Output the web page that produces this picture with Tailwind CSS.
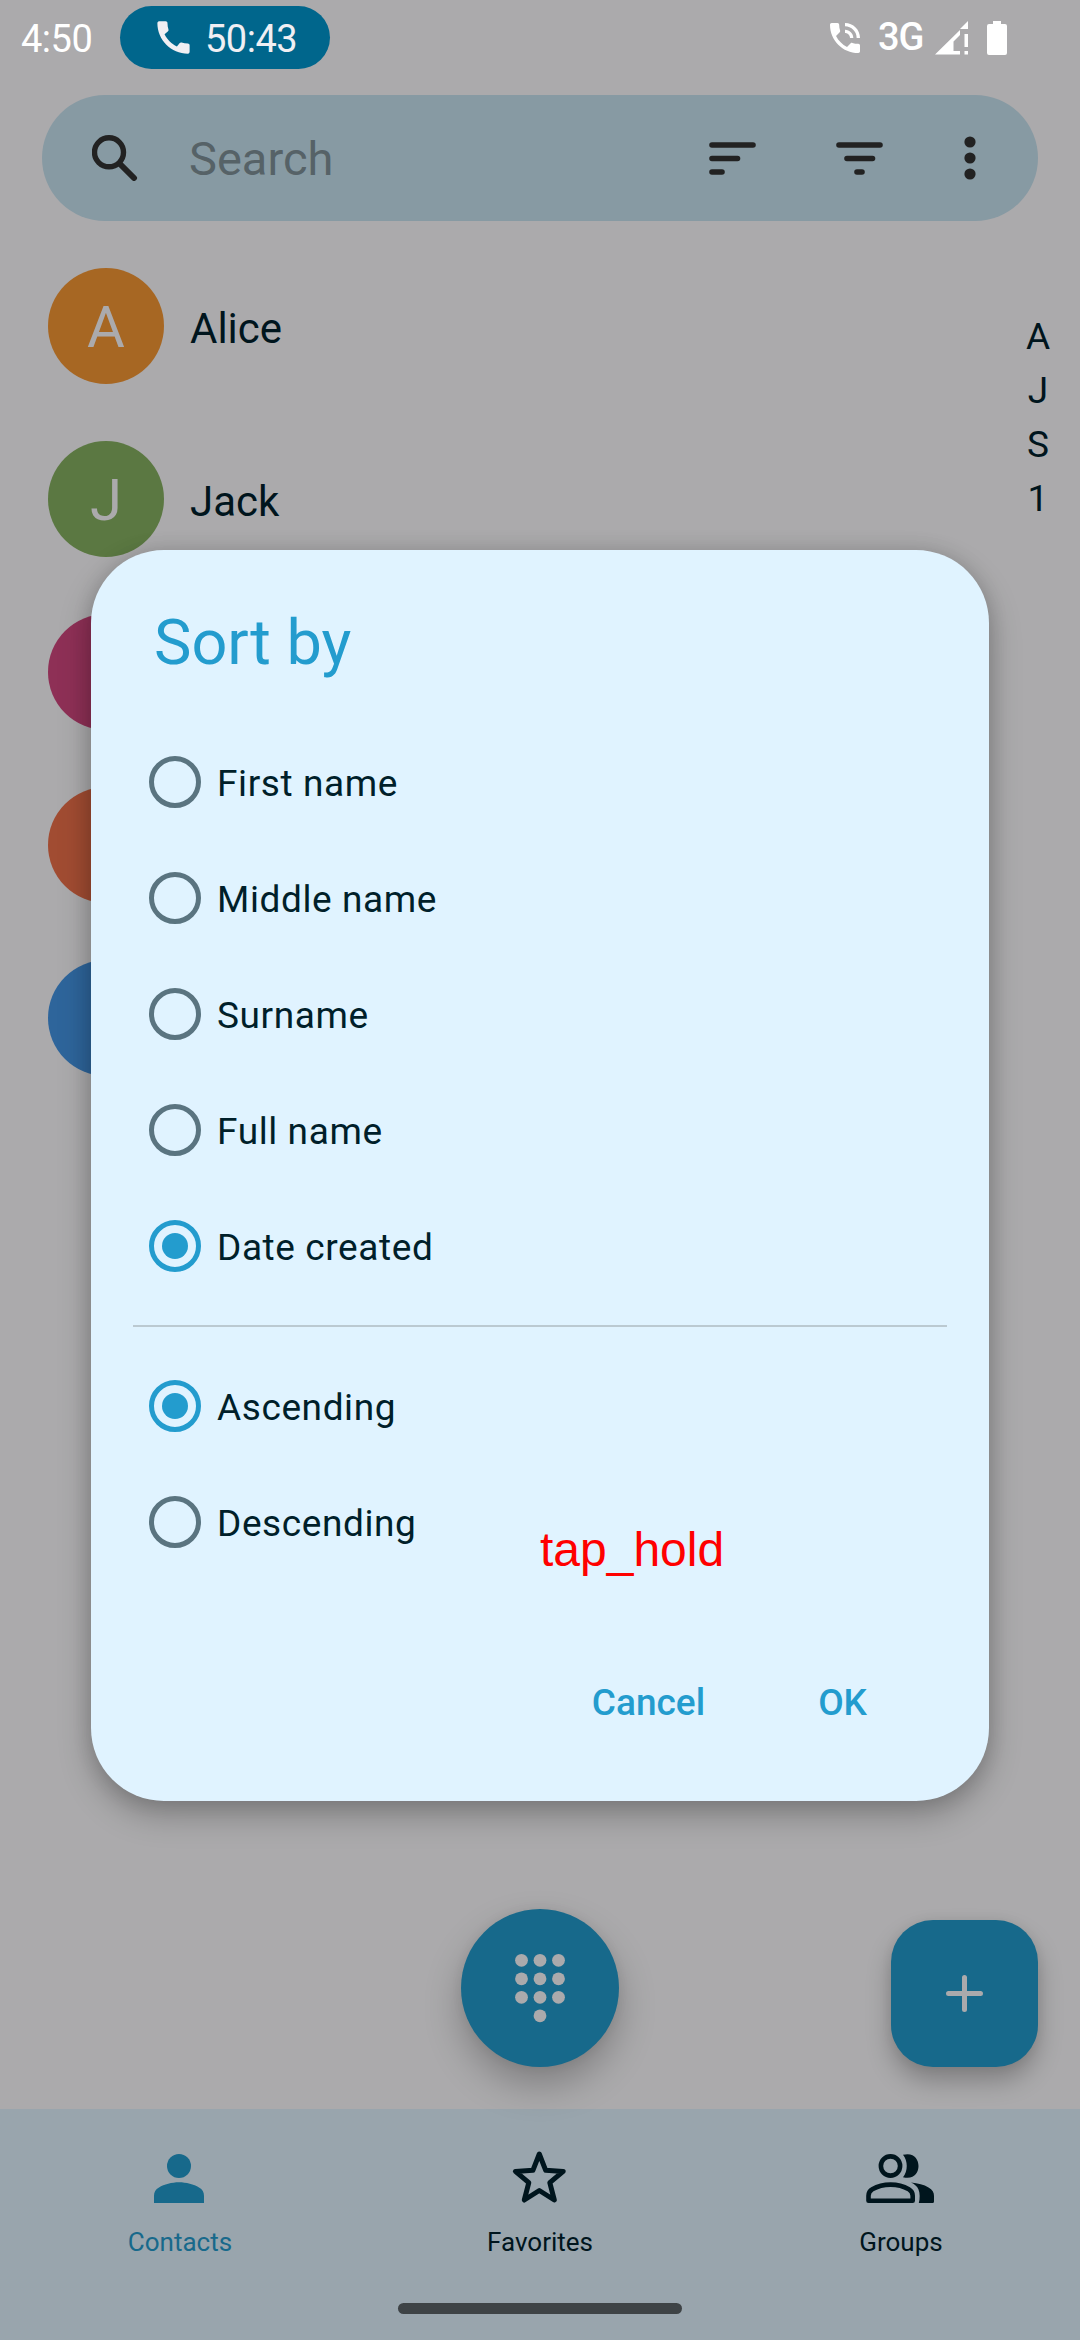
<!DOCTYPE html>
<html lang="en">
<head>
<meta charset="utf-8">
<title>Contacts</title>
<script src="https://cdn.jsdelivr.net/npm/@tailwindcss/browser@4"></script>
</head>
<body class="relative flex h-[2340px] w-[1080px] flex-col overflow-hidden bg-[#abaaac] font-[Roboto,sans-serif] text-[#00151d]">

<!-- Status bar -->
<header class="flex h-[95px] shrink-0 items-start pl-[21px] text-[38px] leading-[63px] text-white">
  <span class="mt-[8px] w-[99px] tracking-[-0.5px]">4:50</span>
  <div class="mt-[6px] flex h-[63px] w-[210px] items-center rounded-full bg-[#00668c] pl-[32px] text-[#f0eff3]">
    <svg class="h-[43px] w-[43px] shrink-0" viewBox="0 0 24 24" fill="currentColor"><path d="M20.01 15.38c-1.23 0-2.42-.2-3.53-.56-.35-.12-.74-.03-1.01.24l-1.57 1.97c-2.83-1.35-5.48-3.9-6.89-6.83l1.95-1.66c.27-.28.35-.67.24-1.02-.37-1.11-.56-2.3-.56-3.53 0-.54-.45-.99-.99-.99H4.19C3.65 3 3 3.24 3 3.99 3 13.28 10.73 21 20.01 21c.71 0 .99-.63.99-1.18v-3.45c0-.54-.45-.99-.99-.99z"/></svg>
    <span class="ml-[10px] mt-[4px] tracking-[-0.5px]">50:43</span>
  </div>
  <div class="ml-auto flex h-[75px] items-center pr-[73px]">
    <svg class="h-[40px] w-[40px]" viewBox="0 0 24 24" fill="currentColor"><path d="M20 15.5c-1.25 0-2.45-.2-3.57-.57-.35-.11-.74-.03-1.02.24l-2.2 2.2c-2.83-1.44-5.15-3.75-6.59-6.59l2.2-2.21c.28-.26.36-.65.25-1C8.7 6.45 8.5 5.25 8.5 4c0-.55-.45-1-1-1H4c-.55 0-1 .45-1 1 0 9.39 7.61 17 17 17 .55 0 1-.45 1-1v-3.5c0-.55-.45-1-1-1zM19 12h2c0-4.97-4.03-9-9-9v2c3.87 0 7 3.13 7 7zm-4 0h2c0-2.76-2.24-5-5-5v2c1.66 0 3 1.34 3 3z"/></svg>
    <span class="ml-[13px] w-[51px] font-medium tracking-[-1px]">3G</span>
    <svg class="ml-[6px] h-[34px] w-[34px]" viewBox="0 0 34 34" fill="currentColor"><path d="M33 0v8h-8zM0 33.500L25 9v5l-6.500 6.500V30H25v3.500zM29.500 13h3.500v13h-3.500zM29.500 30h3.500v3.500h-3.500z"/></svg>
    <svg class="ml-[18px] h-[34px] w-[20px]" viewBox="0 0 20 34" fill="currentColor"><path d="M6 0h8v3h4a2 2 0 0 1 2 2v27a2 2 0 0 1-2 2H2a2 2 0 0 1-2-2V5a2 2 0 0 1 2-2h4z"/></svg>
  </div>
</header>

<!-- Search bar -->
<div class="mx-[42px] flex h-[126px] shrink-0 items-center rounded-full bg-[#879aa3] text-[#222]">
  <svg class="ml-[50px] h-[46px] w-[46px]" viewBox="0 0 46 46" fill="none" stroke="currentColor" stroke-width="5.400" stroke-linecap="round"><circle cx="17" cy="17.300" r="14.500"/><path stroke-width="6" d="M29 30L42 43"/></svg>
  <span class="ml-[51px] mt-[3px] text-[47px] text-[#566267]">Search</span>
  <svg class="ml-auto h-[33px] w-[47px]" viewBox="0 0 47 33" stroke="currentColor" stroke-width="5.600" stroke-linecap="round"><path d="M3 3h41M3 16.500h25.500M3 30h10"/></svg>
  <svg class="ml-[80px] h-[33px] w-[47px]" viewBox="0 0 47 33" stroke="currentColor" stroke-width="5.600" stroke-linecap="round"><path d="M3 3h41M11 16.500h25.500M21 30h5"/></svg>
  <svg class="ml-[81px] mr-[62px] h-[44px] w-[12px]" viewBox="0 0 12 44" fill="currentColor"><circle cx="6" cy="6" r="5.600"/><circle cx="6" cy="22" r="5.600"/><circle cx="6" cy="38" r="5.600"/></svg>
</div>

<!-- Contact list -->
<main class="relative flex grow items-start justify-between pl-[48px] pr-[26px]">
  <ul class="mt-[47px] flex flex-col gap-[57px] text-[42px]">
    <li class="flex h-[116px] items-center gap-[26px]"><span class="flex h-[116px] w-[116px] items-center justify-center rounded-full bg-[#a76723] pt-[2px] text-[58px] text-[#abaaac]">A</span><span class="mt-[4px]">Alice</span></li>
    <li class="flex h-[116px] items-center gap-[26px]"><span class="flex h-[116px] w-[116px] items-center justify-center rounded-full bg-[#5b7842] pt-[2px] text-[58px] text-[#abaaac]">J</span><span class="mt-[4px]">Jack</span></li>
    <li class="h-[116px] w-[116px] rounded-full bg-[#8e3056]"></li>
    <li class="h-[116px] w-[116px] rounded-full bg-[#a14c32]"></li>
    <li class="h-[116px] w-[116px] rounded-full bg-[#2e659b]"></li>
  </ul>
  <ol class="mt-[89px] w-[32px] text-center text-[37px] leading-[54px]">
    <li>A</li><li>J</li><li>S</li><li>1</li>
  </ol>
</main>

<!-- Bottom navigation -->
<nav class="h-[231px] shrink-0 bg-[#99a5ad] text-[26px]">
  <div class="grid h-[194px] grid-cols-3">
    <div class="flex flex-col items-center pt-[40px] text-[#17698b]">
      <svg class="h-[60px] w-[72px]" viewBox="0 0 72 60" fill="currentColor"><circle cx="35" cy="17" r="12"/><path d="M10 54v-7c0-4 1.500-6.500 5-8.500 5-3 13-5.200 20-5.200s15 2.200 20 5.200c3.500 2 5 4.500 5 8.500v7z"/></svg>
      <span class="mt-[14px]">Contacts</span>
    </div>
    <div class="flex flex-col items-center pt-[40px]">
      <svg class="h-[60px] w-[72px]" viewBox="0 0 72 60" fill="none" stroke="currentColor" stroke-width="5" stroke-linejoin="round"><path d="M35.300 5l6.400 16.300 17.500 1.100-13.400 11.300 4.500 17.300-15-9.500-15 9.500 4.500-17.300-13.400-11.300 17.500-1.100z"/></svg>
      <span class="mt-[14px]">Favorites</span>
    </div>
    <div class="flex flex-col items-center pt-[40px]">
      <svg class="h-[60px] w-[72px]" viewBox="0 0 72 60" fill="currentColor"><g fill="none" stroke="currentColor" stroke-width="4.600" stroke-linejoin="round"><circle cx="26.500" cy="17" r="9.600"/><path d="M4.500 51.700v-5c0-3 1.200-5 3.800-6.500 4.700-2.700 12-4.600 18.300-4.600s13.500 1.900 18.200 4.600c2.600 1.500 3.900 3.500 3.900 6.500v5z"/></g><path d="M39 5.800C50 3 54.500 10.500 54.500 17S50 31 39 28.200C44 22 44 12 39 5.800zM47 33.500c7 .6 13 2.200 17.500 5 4 2.300 5.500 5 5.500 8.500v5.500a1.500 1.500 0 0 1-1.500 1.500H54.800c1.200-4 1.200-10-.3-13.500-1.200-3-4-5.500-7.500-7z"/></svg>
      <span class="ml-[2px] mt-[14px]">Groups</span>
    </div>
  </div>
  <div class="mx-auto h-[11px] w-[284px] rounded-full bg-[#3e4346]"></div>
</nav>

<!-- Floating buttons -->
<button class="absolute left-[461px] top-[1909px] flex h-[158px] w-[158px] items-center justify-center rounded-full bg-[#17698b] text-[#abaaac] shadow-[0_18px_36px_rgba(0,0,0,0.25),0_0_12px_rgba(0,0,0,0.06)]">
  <svg class="h-[70px] w-[52px]" viewBox="0 0 52 70" fill="currentColor"><circle cx="7.500" cy="7.300" r="6.400"/><circle cx="26" cy="7.300" r="6.400"/><circle cx="44.500" cy="7.300" r="6.400"/><circle cx="7.500" cy="25.800" r="6.400"/><circle cx="26" cy="25.800" r="6.400"/><circle cx="44.500" cy="25.800" r="6.400"/><circle cx="7.500" cy="44.300" r="6.400"/><circle cx="26" cy="44.300" r="6.400"/><circle cx="44.500" cy="44.300" r="6.400"/><circle cx="26" cy="62.800" r="6.400"/></svg>
</button>
<button class="absolute left-[891px] top-[1920px] flex h-[147px] w-[147px] items-center justify-center rounded-[42px] bg-[#17698b] text-[#abaaac] shadow-[0_14px_24px_rgba(0,0,0,0.25),0_0_12px_rgba(0,0,0,0.06)]">
  <svg class="h-[37px] w-[37px]" viewBox="0 0 37 37" stroke="currentColor" stroke-width="5" stroke-linecap="round"><path d="M18.500 2.500v32M2.500 18.500h32"/></svg>
</button>

<!-- Sort dialog -->
<section class="absolute left-[91px] top-[550px] flex h-[1251px] w-[898px] flex-col rounded-[73px] bg-[#e0f3ff] text-[37px] text-[#001f2a] shadow-[0_14px_32px_rgba(0,0,0,0.26),0_0_20px_rgba(0,0,0,0.12)]">
  <h1 class="ml-[63px] mt-[56px] h-[118px] text-[63px] leading-[74px] text-[#239cce]">Sort by</h1>
  <div class="flex flex-col pl-[58px] tracking-[0.6px]">
    <label class="flex h-[116px] items-center gap-[16px]"><i class="h-[52px] w-[52px] rounded-full border-[5px] border-[#5a7480]"></i><span class="mt-[4px]">First name</span></label>
    <label class="flex h-[116px] items-center gap-[16px]"><i class="h-[52px] w-[52px] rounded-full border-[5px] border-[#5a7480]"></i><span class="mt-[4px]">Middle name</span></label>
    <label class="flex h-[116px] items-center gap-[16px]"><i class="h-[52px] w-[52px] rounded-full border-[5px] border-[#5a7480]"></i><span class="mt-[4px]">Surname</span></label>
    <label class="flex h-[116px] items-center gap-[16px]"><i class="h-[52px] w-[52px] rounded-full border-[5px] border-[#5a7480]"></i><span class="mt-[4px]">Full name</span></label>
    <label class="flex h-[116px] items-center gap-[16px]"><i class="flex h-[52px] w-[52px] items-center justify-center rounded-full border-[5px] border-[#239cce]"><b class="h-[26px] w-[26px] shrink-0 rounded-full bg-[#239cce]"></b></i><span class="mt-[4px]">Date created</span></label>
  </div>
  <div class="mx-[42px] mt-[21px] h-[2px] shrink-0 bg-[#bbc9d1]"></div>
  <div class="mt-[21px] flex flex-col pl-[58px] tracking-[0.6px]">
    <label class="flex h-[116px] items-center gap-[16px]"><i class="flex h-[52px] w-[52px] items-center justify-center rounded-full border-[5px] border-[#239cce]"><b class="h-[26px] w-[26px] shrink-0 rounded-full bg-[#239cce]"></b></i><span class="mt-[4px]">Ascending</span></label>
    <label class="flex h-[116px] items-center gap-[16px]"><i class="h-[52px] w-[52px] rounded-full border-[5px] border-[#5a7480]"></i><span class="mt-[4px]">Descending</span></label>
  </div>
  <div class="mt-[101px] flex justify-end gap-[113px] pr-[122px] font-medium leading-[44px] text-[#239cce]">
    <button>Cancel</button>
    <button>OK</button>
  </div>
</section>

<!-- Gesture label -->
<span class="absolute left-[540px] top-[1522px] font-['Liberation_Sans',sans-serif] text-[48px] leading-[55px] text-[#f00]">tap_hold</span>
</body>
</html>
